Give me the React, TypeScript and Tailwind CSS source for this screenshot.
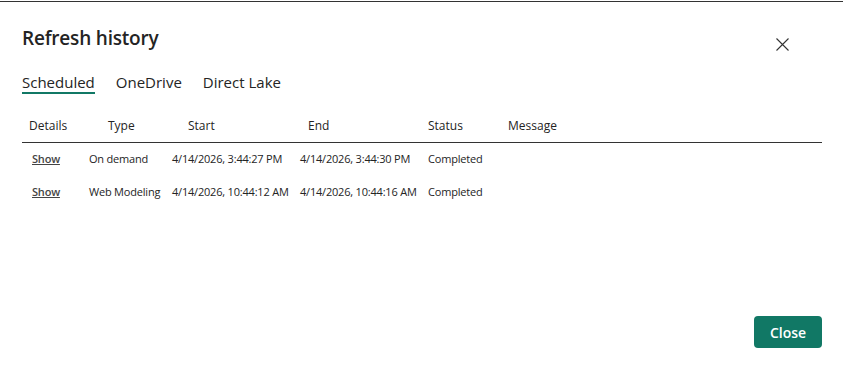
import React from "react";

const rows = [
  { type: "On demand", start: "4/14/2026, 3:44:27 PM", end: "4/14/2026, 3:44:30 PM", status: "Completed" },
  { type: "Web Modeling", start: "4/14/2026, 10:44:12 AM", end: "4/14/2026, 10:44:16 AM", status: "Completed" },
];

export default function App() {
  return (
    <div
      className="w-[845px] h-[372px] bg-white text-[#242424] relative overflow-hidden"
      style={{ fontFamily: '"Open Sans", "Noto Sans", sans-serif' }}
    >
      <div className="h-px mt-px mr-[2px] bg-[#333333]" />
      <div className="px-[22px]">
        <div className="flex items-start justify-between pt-[22px]">
          <h1 className="text-[19px] leading-[28px] font-semibold tracking-[-0.2px]">Refresh history</h1>
          <button className="mt-[13px] mr-[34px] w-[14px] h-[14px] flex items-center justify-center text-[#333]">
            <svg width="13" height="13" viewBox="0 0 13 13" fill="none" stroke="#333" strokeWidth="1.1">
              <path d="M0.5 0.5 L12.5 12.5 M12.5 0.5 L0.5 12.5" />
            </svg>
          </button>
        </div>
        <div className="flex gap-[21px] mt-[20px] text-[15px] leading-[20px] tracking-[0px]">
          <div className="border-b-2 border-[#117865] pb-[0px]">Scheduled</div>
          <div>OneDrive</div>
          <div>Direct Lake</div>
        </div>
        <div className="mt-[15px] w-[800px]">
          <div className="flex items-center h-[34px] border-b border-[#333333] text-[12px] pl-[7px]">
            <div className="w-[79px]">Details</div>
            <div className="w-[80px]">Type</div>
            <div className="w-[120px]">Start</div>
            <div className="w-[120px]">End</div>
            <div className="w-[80px]">Status</div>
            <div>Message</div>
          </div>
          <div>
            {rows.map((r, i) => (
              <div key={i} className="flex items-center h-[33px] text-[11px] pl-[10px] tracking-[-0.2px]">
                <div className="w-[57px]">
                  <span className="underline font-semibold text-[#444]">Show</span>
                </div>
                <div className="w-[83px]">{r.type}</div>
                <div className="w-[128px]">{r.start}</div>
                <div className="w-[128px]">{r.end}</div>
                <div>{r.status}</div>
              </div>
            ))}
          </div>
        </div>
      </div>
      <button className="absolute left-[754px] top-[316px] w-[68px] h-[32px] rounded-[4px] bg-[#117865] text-white text-[14px] font-semibold">
        Close
      </button>
    </div>
  );
}
